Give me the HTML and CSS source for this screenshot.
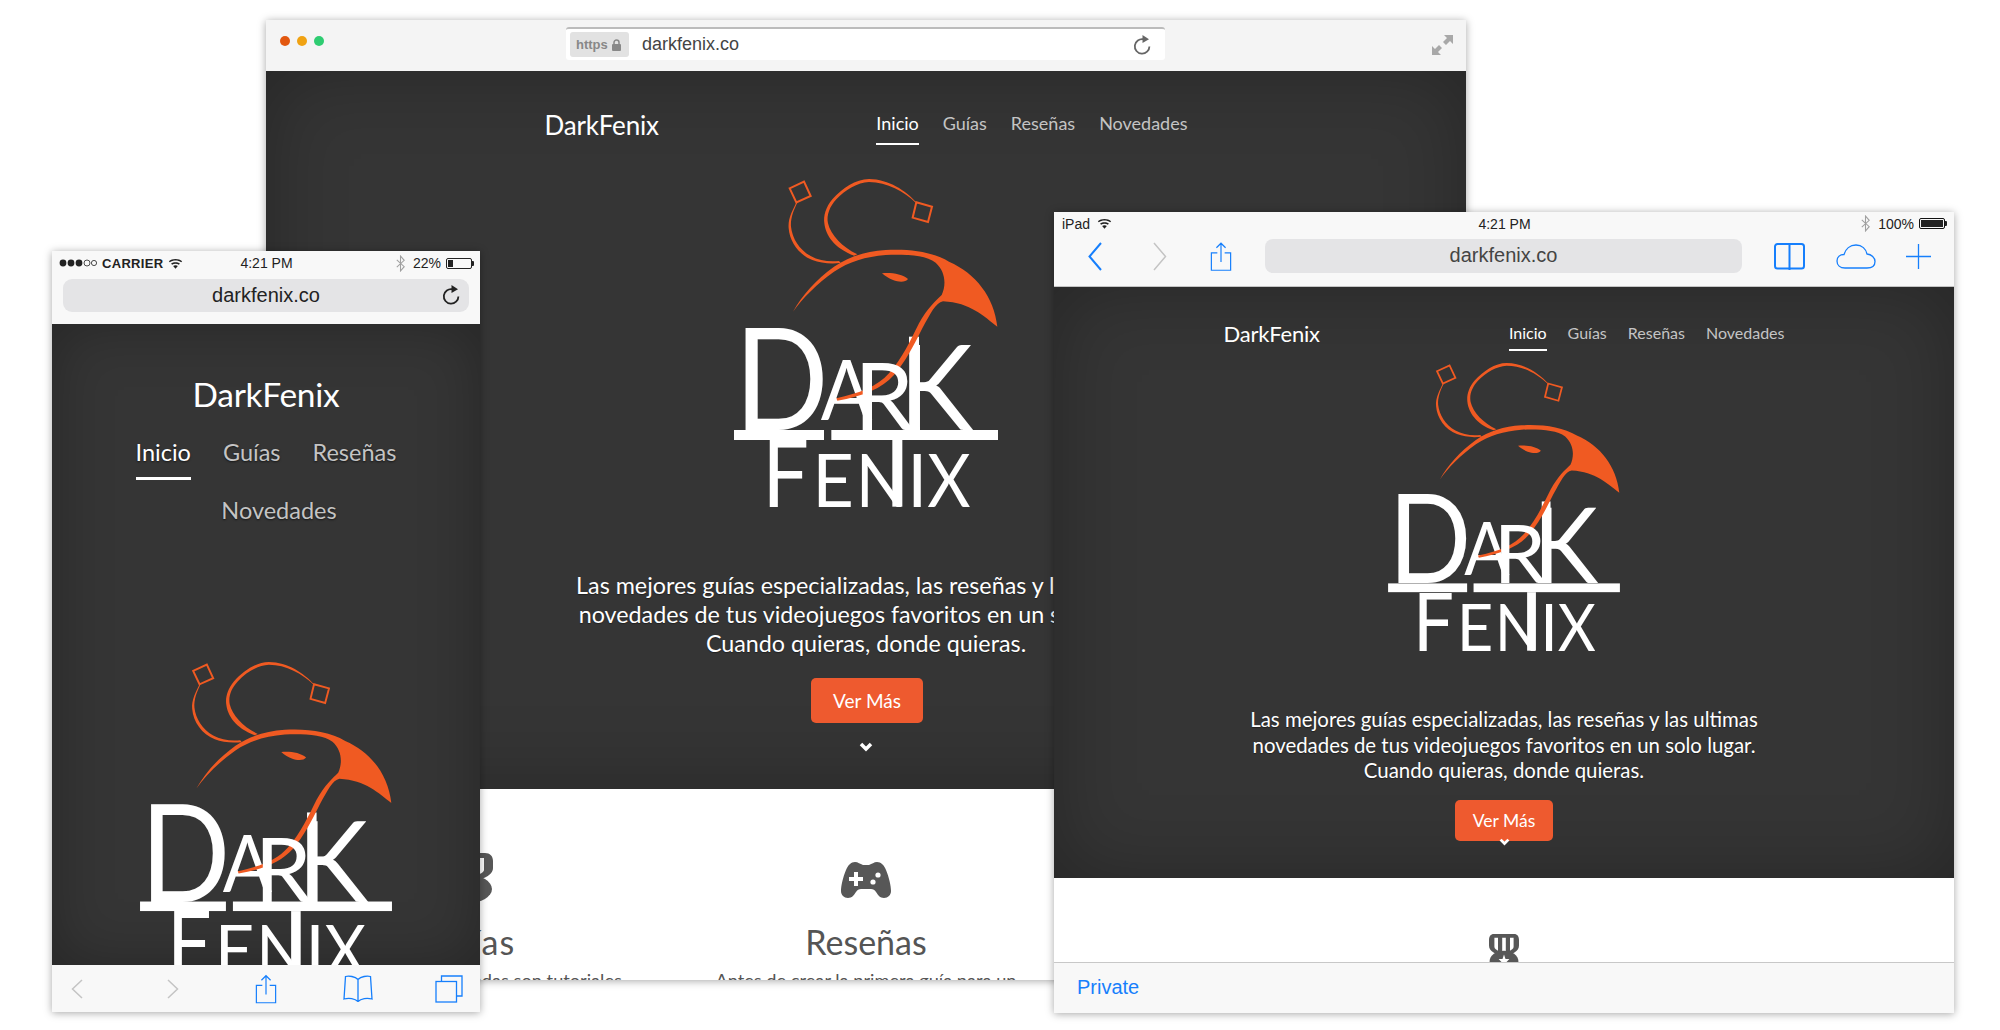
FILE: index.html
```html
<!DOCTYPE html>
<html lang="es">
<head>
<meta charset="utf-8">
<title>DarkFenix</title>
<link rel="stylesheet" href="styles.css">
</head>
<body>
<svg class="defs" xmlns="http://www.w3.org/2000/svg">
  <symbol id="logo" viewBox="45 57 792 984">
    <text class="lg" x="540" y="810" font-size="355" textLength="222" lengthAdjust="spacingAndGlyphs">K</text>
    <rect class="lw" x="570" y="530" width="30" height="40"/>
    <text class="lg" x="305" y="780" font-size="250" textLength="155" lengthAdjust="spacingAndGlyphs">A</text>
    <g class="lo-line">
      <path d="M212 85 255 65 275 108 232 127Z"/>
      <path d="M592 127 639 140 627 186 581 173Z"/>
    </g>
    <path class="lo-fill" d="M232 127C222 150 206 175 209 205C212 245 240 285 280 300C305 310 335 312 365 309L360 303C330 306 300 302 275 288C240 268 220 235 216 200C214 175 224 150 235 128Z"/>
    <path class="lo-fill" d="M592 127C560 92 510 58 450 57C410 57 370 85 340 118C320 142 313 168 316 190C320 225 345 265 405 287L415 283C370 262 335 225 327 190C322 165 332 140 352 118C380 88 415 68 450 66C505 66 555 95 590 128Z"/>
    <path class="lo-fill" d="M222 455C250 405 290 360 345 320C390 290 440 274 500 270C570 266 640 275 690 305C770 340 825 410 835 500C795 470 755 428 672 424C650 428 635 460 610 505C585 555 560 605 525 645C490 685 430 710 355 722L352 715C420 700 475 680 510 640C550 595 575 540 600 490C625 445 650 422 668 405C682 375 680 335 650 308C620 285 560 283 500 285C440 290 390 305 345 335C295 370 250 415 222 455Z"/>
    <path class="lo-fill" d="M489 340C515 337 550 342 567 357C560 367 540 367 522 360C510 356 498 348 489 340Z"/>
    <text class="lg" x="405" y="810" font-size="278" textLength="180" lengthAdjust="spacingAndGlyphs">R</text>
    <text class="lg" x="46" y="810" font-size="424" textLength="283" lengthAdjust="spacingAndGlyphs">D</text>
    <rect class="lw" x="45" y="810" width="270" height="30"/>
    <rect class="lw" x="337" y="810" width="500" height="30"/>
    <text class="lg" x="130" y="1040" font-size="278" textLength="140" lengthAdjust="spacingAndGlyphs">F</text>
    <text class="lg" x="280" y="1040" font-size="222" textLength="125" lengthAdjust="spacingAndGlyphs">E</text>
    <text class="lg" x="410" y="1040" font-size="222" textLength="155" lengthAdjust="spacingAndGlyphs">N</text>
    <rect class="lw" x="520" y="840" width="30" height="200"/>
    <text class="lg" x="565" y="1040" font-size="222" textLength="60" lengthAdjust="spacingAndGlyphs">I</text>
    <text class="lg" x="625" y="1040" font-size="222" textLength="130" lengthAdjust="spacingAndGlyphs">X</text>
  </symbol>
  <symbol id="medal" viewBox="0 0 50 50" preserveAspectRatio="none">
    <path class="ic-gray" fill-rule="evenodd" d="M8 0H42C47 0 50 3 50 8V15C50 19 47 22 43 24L35 28H15L7 24C3 22 0 19 0 15V8C0 3 3 0 8 0ZM9 5V17C9 19 13 21 15 22V5ZM22 5V24H28V5ZM35 5V22C37 21 41 19 41 17V5Z"/>
    <ellipse class="ic-gray" cx="25" cy="36" rx="24" ry="14"/>
    <path class="game-w" d="M25 27 27.500 33H34L29 37 31 44 25 40 19 44 21 37 16 33H22.500Z"/>
  </symbol>
  <symbol id="chev" viewBox="0 0 14 10">
    <path class="chev" d="M2 2 7 7 12 2"/>
  </symbol>
  <symbol id="share" viewBox="0 0 24 32">
    <path class="blue-line" d="M8 12H1.500V31H22.500V12H16M12 22V1.500M7 6.500 12 1.500 17 6.500"/>
  </symbol>
  <symbol id="wifi" viewBox="0 0 14 10">
    <path class="ink" d="M7 10 4.800 7.400C6 6.300 8 6.300 9.200 7.400ZM3.800 6.200 2.900 5.100C5 3.300 9 3.300 11.100 5.100L10.200 6.200C8.500 4.800 5.500 4.800 3.800 6.200ZM1.700 3.900.8 2.800C4 0 10 0 13.200 2.800L12.300 3.900C9.500 1.500 4.500 1.500 1.700 3.900Z"/>
  </symbol>
  <symbol id="bt" viewBox="0 0 9 16">
    <path class="gray-line" d="M1 4.500 8 11 4.500 15V1L8 5 1 11.500"/>
  </symbol>
  <symbol id="reload" viewBox="0 0 20 20">
    <path class="reload-line" d="M11.500 4.200A7.300 7.300 0 1 0 17.400 11.400"/>
    <path class="reload-fill" d="M10.500 0 17 4.300 10.500 8Z"/>
  </symbol>
</svg>

<main class="canvas">
  <section class="window desktop">
    <header class="mac-bar">
      <div class="dots"><span class="dot dot-r"></span><span class="dot dot-y"></span><span class="dot dot-g"></span></div>
      <div class="mac-url">
        <span class="chip">https
          <svg class="lock" viewBox="0 0 9 12"><path class="lock-line" d="M2 6V3.500A2.500 2.500 0 0 1 7 3.500V6"/><rect class="lock-fill" x="0" y="5" width="9" height="7" rx="1"/></svg>
        </span>
        <span class="mac-url-text">darkfenix.co</span>
        <svg class="mac-reload"><use href="#reload"/></svg>
      </div>
      <svg class="expand" viewBox="0 0 21 20">
        <path class="expand-fill" d="M21 0V9L18 6 14 10 11 7 15 3 12 0ZM0 20V11L3 14 7 10 10 13 6 17 9 20Z"/>
      </svg>
    </header>
    <div class="page">
      <div class="hero hero-d">
        <div class="site-nav nav-d">
          <span class="brand">DarkFenix</span>
          <nav class="links">
            <a class="link active">Inicio</a><a class="link">Guías</a><a class="link">Reseñas</a><a class="link">Novedades</a>
          </nav>
        </div>
        <svg class="logo logo-d"><use href="#logo"/></svg>
        <p class="lead">Las mejores guías especializadas, las reseñas y las ultimas<br>novedades de tus videojuegos favoritos en un solo lugar.<br>Cuando quieras, donde quieras.</p>
        <a class="btn">Ver Más</a>
        <svg class="chevron"><use href="#chev"/></svg>
      </div>
      <div class="features">
        <div class="feature feature-first">
          <div class="feat-icon"><svg class="medal"><use href="#medal"/></svg></div>
          <h2>Guías</h2>
          <p>Las guías especializadas son tutoriales</p>
        </div>
        <div class="feature">
          <div class="feat-icon">
            <svg class="game" viewBox="0 0 50 36">
              <path class="ic-gray" d="M14 0C10 0 7 3 5 8 2 15 0 24 0 29 0 33 3 36 7 36 11 36 13 33 15 30 16 28 18 27 20 27H30C32 27 34 28 35 30 37 33 39 36 43 36 47 36 50 33 50 29 50 24 48 15 45 8 43 3 40 0 36 0 33 0 31 2 28 3H22C19 2 17 0 14 0Z"/>
              <path class="game-w" d="M13 10H17V15H22V19H17V24H13V19H8V15H13Z"/>
              <circle class="game-w" cx="37" cy="13" r="2.600"/>
              <circle class="game-w" cx="32" cy="20" r="2.600"/>
            </svg>
          </div>
          <h2>Reseñas</h2>
          <p>Antes de crear la primera guía para un</p>
        </div>
      </div>
    </div>
  </section>

  <section class="window phone">
    <header class="ph-head">
      <div class="ph-status">
        <div class="st-left">
          <svg class="signal" viewBox="0 0 38 8">
            <circle class="ink" cx="4" cy="4" r="3.400"/><circle class="ink" cx="12" cy="4" r="3.400"/><circle class="ink" cx="20" cy="4" r="3.400"/>
            <circle class="ring" cx="28" cy="4" r="3"/><circle class="ring" cx="35" cy="4" r="2.600"/>
          </svg>
          <span class="carrier">CARRIER</span>
          <svg class="wifi"><use href="#wifi"/></svg>
        </div>
        <span class="st-time">4:21 PM</span>
        <div class="st-right">
          <svg class="bt"><use href="#bt"/></svg>
          <span>22%</span>
          <span class="battery"><span class="battery-level level-22"></span></span>
        </div>
      </div>
      <div class="ph-url">
        <span class="ph-url-text">darkfenix.co</span>
        <svg class="ph-reload"><use href="#reload"/></svg>
      </div>
    </header>
    <div class="page page-p">
      <div class="brand brand-p">DarkFenix</div>
      <nav class="links links-p">
        <a class="link active">Inicio</a><a class="link">Guías</a><a class="link">Reseñas</a><a class="link link-last">Novedades</a>
      </nav>
      <svg class="logo logo-p"><use href="#logo"/></svg>
    </div>
    <footer class="ph-bar">
      <svg class="nav-arrow" viewBox="0 0 12 20"><path class="gray-arrow" d="M11 1 1.500 10 11 19"/></svg>
      <svg class="nav-arrow ph-fwd" viewBox="0 0 12 20"><path class="gray-arrow" d="M1 1 10.500 10 1 19"/></svg>
      <svg class="ph-share"><use href="#share"/></svg>
      <svg class="ph-book" viewBox="0 0 30 27"><path class="blue-line" d="M15 4.500C12 1.500 6 .5 2.500 1.500L1 24C6 22.500 12 23.500 15 26.500 18 23.500 24 22.500 29 24L27.500 1.500C24 .5 18 1.500 15 4.500ZM15 4.500V26"/></svg>
      <svg class="ph-tabs" viewBox="0 0 28 28"><path class="blue-line" d="M6.500 6V1H27V21H21.500"/><rect class="blue-line" x="1" y="6.500" width="20.500" height="20.500"/></svg>
    </footer>
  </section>

  <section class="window tablet">
    <header class="tb-head">
      <div class="tb-status">
        <div class="st-left"><span>iPad</span><svg class="wifi wifi-t"><use href="#wifi"/></svg></div>
        <span class="st-time">4:21 PM</span>
        <div class="st-right st-right-t">
          <svg class="bt"><use href="#bt"/></svg>
          <span>100%</span>
          <span class="battery battery-t"><span class="battery-level level-full"></span></span>
        </div>
      </div>
      <div class="tb-tools">
        <svg class="tb-arrow" viewBox="0 0 14 29"><path class="blue-line wide" d="M13 1 1.500 14.500 13 28"/></svg>
        <svg class="tb-arrow tb-fwd" viewBox="0 0 14 29"><path class="gray-arrow" d="M1 1 12.500 14.500 1 28"/></svg>
        <svg class="tb-share"><use href="#share"/></svg>
        <div class="tb-url">darkfenix.co</div>
        <svg class="tb-book" viewBox="0 0 31 29"><path class="blue-line wide" d="M15.500 2H27.500A2.500 2.500 0 0 1 30 4.500V24A2.500 2.500 0 0 1 27.500 26.500H3.500A2.500 2.500 0 0 1 1 24V4.500A2.500 2.500 0 0 1 3.500 2H15.500ZM15.500 2V28"/></svg>
        <svg class="tb-cloud" viewBox="0 0 40 25"><path class="blue-line" d="M9 24C4 24 1 21 1 17 1 13 4 10.500 8 10.500 9.500 5 14 1 20 1 26 1 30 5 31 10 35.500 10.500 39 13.500 39 17.500 39 21.500 36 24 31 24Z"/></svg>
        <svg class="tb-plus" viewBox="0 0 25 25"><path class="blue-line" d="M12.500 0V25M0 12.500H25"/></svg>
      </div>
    </header>
    <div class="page">
      <div class="hero hero-t">
        <div class="site-nav nav-t">
          <span class="brand brand-t">DarkFenix</span>
          <nav class="links links-t">
            <a class="link active">Inicio</a><a class="link">Guías</a><a class="link">Reseñas</a><a class="link">Novedades</a>
          </nav>
        </div>
        <svg class="logo logo-t"><use href="#logo"/></svg>
        <p class="lead lead-t">Las mejores guías especializadas, las reseñas y las ultimas<br>novedades de tus videojuegos favoritos en un solo lugar.<br>Cuando quieras, donde quieras.</p>
        <a class="btn btn-t">Ver Más</a>
        <svg class="chevron chevron-t"><use href="#chev"/></svg>
      </div>
      <div class="features-t"><svg class="medal-t"><use href="#medal"/></svg></div>
    </div>
    <footer class="tb-bar">Private</footer>
  </section>
</main>
</body>
</html>
```
FILE: styles.css
```css
* { box-sizing: border-box; }
html, body { margin: 0; height: 100%; background: #fff; overflow: hidden; }
.defs { display: none; }
.canvas { position: relative; width: 2000px; height: 1030px; font-family: "Liberation Sans", Arial, sans-serif; }

/* logo */
.lg { font-family: Lato, sans-serif; font-weight: 400; fill: #fff; }
.lw { fill: #fff; }
.lo-fill { fill: #f05a22; }
.lo-line { fill: none; stroke: #f05a22; stroke-width: 6; }
.logo { display: block; flex: none; }
.logo-d { width: 264px; height: 328px; margin-top: 34px; }
.logo-t { width: 232px; height: 288px; margin-top: 13px; }
.logo-p { width: 252px; height: 313px; margin: 137px auto 0; }

/* windows */
.window { position: absolute; display: flex; flex-direction: column; overflow: hidden; background: #fff; box-shadow: 0 1px 8px rgba(0,0,0,.35); }
.desktop { left: 266px; top: 20px; width: 1200px; height: 960px; }
.phone { left: 52px; top: 251px; width: 428px; height: 761px; }
.tablet { left: 1054px; top: 212px; width: 900px; height: 801px; }
.page { flex: 1; min-height: 0; overflow: hidden; background: #fff; }

/* shared site */
.hero { display: flex; flex-direction: column; align-items: center; background: #353535; box-shadow: inset 0 0 80px rgba(0,0,0,.28); font-family: Lato, sans-serif; color: #fff; flex: none; }
.hero-d { height: 718px; padding-top: 40px; }
.hero-t { height: 591px; padding-top: 35px; }
.site-nav { display: flex; justify-content: space-between; align-items: flex-start; }
.nav-d { width: 643px; height: 34px; }
.nav-t { width: 561px; height: 28px; }
.brand { font-size: 26px; line-height: 28px; letter-spacing: -.2px; color: #fff; }
.brand-t { font-size: 22px; line-height: 24px; letter-spacing: -.2px; }
.links { display: flex; gap: 24px; }
.link { display: block; font-size: 18px; line-height: 24px; padding-bottom: 8px; color: #c4c4c4; }
.link.active { color: #fff; border-bottom: 2px solid #fff; }
.links-t { gap: 21px; }
.links-t .link { font-size: 16px; line-height: 22px; padding-bottom: 5px; }
.lead { margin: 64px 0 0; font-size: 23.300px; line-height: 29px; text-align: center; color: #fff; white-space: nowrap; text-shadow: 0 1px 1px rgba(0,0,0,.4); }
.lead-t { margin-top: 56px; font-size: 20.400px; line-height: 25.500px; }
.btn { display: flex; align-items: center; justify-content: center; width: 112px; height: 45px; margin: 20px 0 0 2px; border-radius: 5px; background: #ee5a2f; color: #fff; font-size: 19px; flex: none; }
.btn-t { width: 98px; height: 41px; margin: 16px 0 0; font-size: 17.500px; }
.chevron { display: block; width: 14px; height: 10px; margin-top: 19px; flex: none; }
.chevron-t { width: 11px; height: 8px; margin-top: -3px; }
.chev { fill: none; stroke: #fff; stroke-width: 3.500; }

.features { display: grid; grid-template-columns: repeat(3, 400px); padding-top: 64px; font-family: Lato, sans-serif; color: #555; }
.feature { text-align: center; min-width: 0; }
.feature-first { padding-left: 10px; }
.feature-first h2 { letter-spacing: 1px; }
.feat-icon { display: flex; justify-content: center; align-items: center; height: 54px; }
.medal { width: 50px; height: 50px; align-self: flex-start; margin-right: 6px; }
.game { width: 50px; height: 36px; }
.ic-gray { fill: #575757; }
.game-w { fill: #fff; }
.feature h2 { margin: 15px 0 0; font-size: 34px; line-height: 40px; font-weight: 400; }
.feature p { margin: 4px 0 0; font-size: 18.200px; line-height: 28px; }
.features-t { display: flex; justify-content: center; padding-top: 56px; }
.medal-t { width: 30px; height: 38px; flex: none; }

/* mac chrome */
.mac-bar { display: flex; align-items: flex-start; height: 51px; flex: none; padding: 7px 13px 0 14px; background: #f4f4f4; }
.dots { display: flex; gap: 7px; margin-top: 9px; }
.dot { width: 10px; height: 10px; border-radius: 50%; }
.dot-r { background: #e2570f; }
.dot-y { background: #f0a212; }
.dot-g { background: #2ecc71; }
.mac-url { display: flex; align-items: center; width: 599px; height: 33px; margin-left: 242px; padding: 0 13px 0 4px; background: #fff; border-top: 2px solid #bbb; border-radius: 3px; color: #666; }
.chip { display: flex; align-items: center; gap: 4px; width: 59px; height: 25px; padding-left: 6px; border-radius: 3px; background: #e2e2e2; color: #888; font-size: 13px; font-weight: 700; }
.lock { width: 9px; height: 12px; }
.lock-line { fill: none; stroke: #888; stroke-width: 1.500; }
.lock-fill { fill: #888; }
.mac-url-text { margin-left: 13px; font-size: 18px; color: #444; }
.mac-reload { width: 20px; height: 20px; margin-left: auto; }
.reload-line { fill: none; stroke: currentColor; stroke-width: 1.800; }
.reload-fill { fill: currentColor; }
.expand { width: 21px; height: 20px; margin: 8px 0 0 auto; }
.expand-fill { fill: #a8a8a8; }

/* ios shared */
.ink { fill: #222; }
.ring { fill: none; stroke: #222; stroke-width: .8; }
.gray-line { fill: none; stroke: #a0a0a0; stroke-width: 1; }
.gray-arrow { fill: none; stroke: #c4c4c4; stroke-width: 1.500; }
.blue-line { fill: none; stroke: #167ffc; stroke-width: 1.300; }
.blue-line.wide { stroke-width: 2; }
.st-left, .st-right { display: flex; align-items: center; gap: 5px; }
.st-right { justify-content: flex-end; gap: 5px; }
.wifi { width: 15px; height: 11px; }
.bt { width: 11px; height: 17px; margin-right: 2px; }
.battery { position: relative; display: block; width: 26px; height: 11px; padding: 1px; margin-right: 2px; border: 1px solid #222; border-radius: 2px; }
.battery::after { content: ""; position: absolute; right: -3px; top: 2px; width: 2px; height: 5px; background: #222; border-radius: 0 1px 1px 0; }
.battery-level { display: block; height: 100%; background: #222; }
.level-22 { width: 22%; }
.level-full { width: 100%; }

/* phone */
.ph-head { flex: none; height: 73px; background: #f8f8f8; }
.ph-status { display: grid; grid-template-columns: 1fr auto 1fr; align-items: center; height: 24px; margin-bottom: 4px; padding: 0 6px 0 7px; font-size: 14px; color: #222; }
.signal { width: 38px; height: 8px; }
.carrier { font-weight: 700; font-size: 13px; letter-spacing: .3px; }
.ph-url { position: relative; display: flex; align-items: center; justify-content: center; height: 33px; margin: 0 11px; border-radius: 9px; background: #e4e4e6; color: #222; }
.ph-url-text { font-size: 20px; color: #222; }
.ph-reload { position: absolute; right: 8px; top: 6px; width: 20px; height: 20px; }
.page-p { background: #353535; box-shadow: inset 0 0 60px rgba(0,0,0,.28); padding-top: 50px; font-family: Lato, sans-serif; }
.brand-p { font-size: 33.500px; line-height: 40px; letter-spacing: -.3px; text-align: center; }
.links-p { flex-wrap: wrap; justify-content: center; gap: 15px 32px; width: 276px; margin: 23px auto 0; }
.links-p .link { font-size: 23.500px; line-height: 30px; padding-bottom: 10px; text-shadow: 0 1px 2px rgba(0,0,0,.6); }
.links-p .link.active { border-bottom-width: 3px; }
.links-p .link-last { padding-bottom: 0; margin-left: 26px; }
.ph-bar { display: flex; align-items: center; flex: none; height: 47px; padding: 0 0 0 19px; background: #f8f8f8; }
.nav-arrow { width: 12px; height: 20px; flex: none; }
.ph-fwd { margin-left: 84px; }
.ph-share { width: 22px; height: 30px; margin-left: 76px; flex: none; }
.ph-book { width: 30px; height: 27px; margin-left: 66px; flex: none; }
.ph-tabs { width: 28px; height: 28px; margin-left: 62px; flex: none; }

/* tablet */
.tb-head { flex: none; height: 75px; background: #f8f8f8; border-bottom: 1px solid #c4c4c4; }
.tb-status { display: grid; grid-template-columns: 1fr auto 1fr; align-items: center; height: 23px; padding: 0 7px 0 8px; font-size: 14px; color: #222; }
.st-right-t { gap: 5px; }
.wifi-t { margin-left: 2px; }
.battery-t { border-color: #111; }
.tb-tools { display: flex; align-items: center; height: 34px; margin-top: 4px; padding: 0 23px 0 34px; }
.tb-arrow { width: 14px; height: 29px; flex: none; }
.tb-fwd { margin-left: 51px; }
.tb-share { width: 22px; height: 31px; margin-left: 43px; flex: none; }
.tb-url { flex: 1; height: 34px; margin-left: 33px; border-radius: 8px; background: #e4e4e6; font-size: 20px; line-height: 32px; text-align: center; color: #444; }
.tb-book { width: 31px; height: 29px; margin-left: 32px; flex: none; }
.tb-cloud { width: 40px; height: 25px; margin-left: 31px; flex: none; }
.tb-plus { width: 25px; height: 25px; margin-left: 30px; flex: none; }
.tb-bar { flex: none; height: 51px; padding-left: 23px; background: #f8f8f8; border-top: 1px solid #c8c8c8; color: #167ffc; font-size: 20px; line-height: 48px; }
```
